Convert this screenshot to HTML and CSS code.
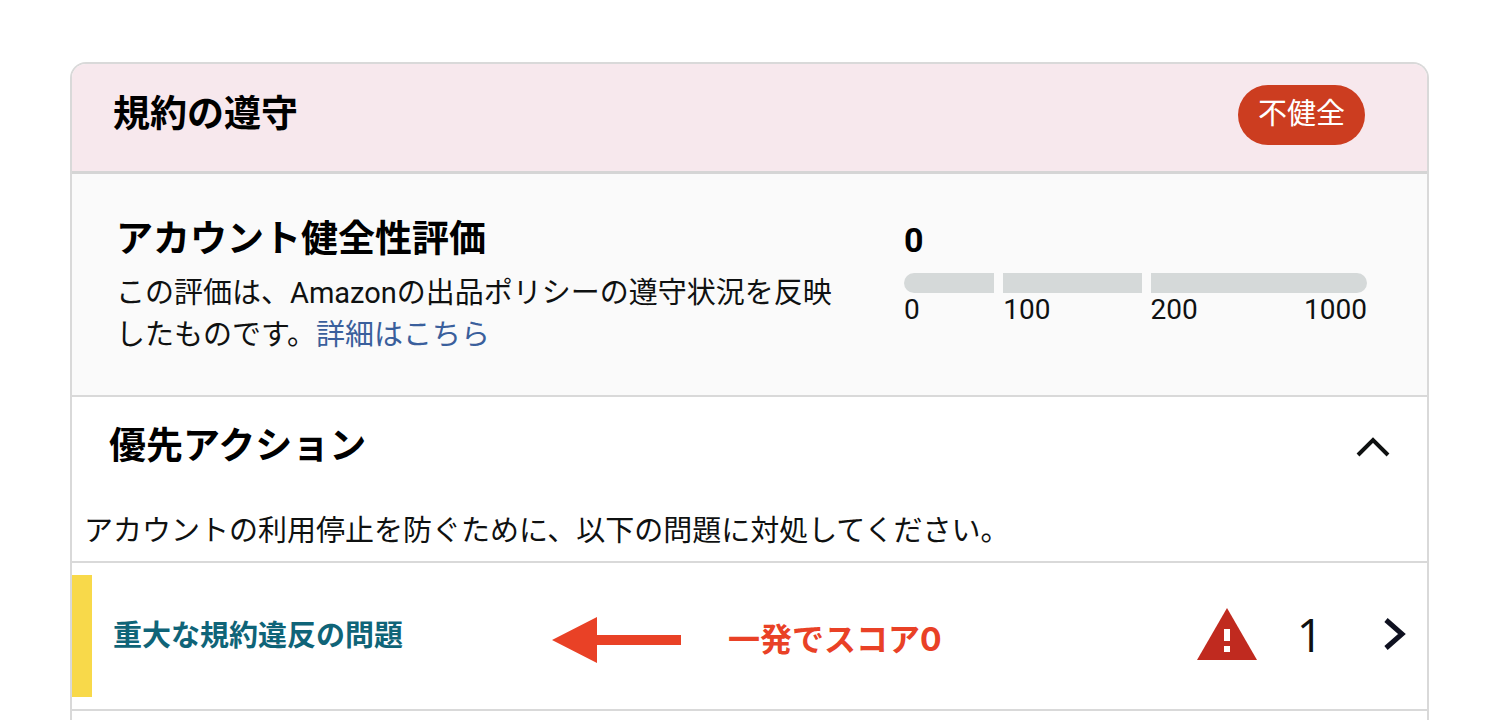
FILE: index.html
```html
<!DOCTYPE html>
<html lang="ja">
<head>
    <meta charset="UTF-8">
    <meta name="viewport" content="width=device-width, initial-scale=1.0">
    <title>規約の遵守</title>
    <link rel="stylesheet" href="styles.css">
</head>
<body>

    <main class="card">
        <header class="card-header">
            <h2>規約の遵守</h2>
            <span class="badge">不健全</span>
        </header>

        <section class="rating">
            <div class="rating-text">
                <h2>アカウント健全性評価</h2>
                <p>この評価は、Amazonの出品ポリシーの遵守状況を反映したものです。<a href="#">詳細はこちら</a></p>
            </div>
            <div class="rating-score">
                <strong class="score">0</strong>
                <div class="scale">
                    <div class="segment"><div class="bar"></div><span>0</span></div>
                    <div class="segment"><div class="bar"></div><span>100</span></div>
                    <div class="segment"><div class="bar"></div><span>200</span><span>1000</span></div>
                </div>
            </div>
        </section>

        <section class="actions">
            <div class="actions-header">
                <h2>優先アクション</h2>
                <button type="button" class="toggle" aria-label="閉じる" aria-expanded="true">
                    <svg width="36" height="24" viewBox="0 0 36 24"><path d="M3 20 L18 5 L33 20" fill="none" stroke="#0f1111" stroke-width="4"/></svg>
                </button>
            </div>
            <p>アカウントの利用停止を防ぐために、以下の問題に対処してください。</p>
        </section>

        <section class="issue">
            <div class="marker"></div>
            <a href="#" class="issue-link">重大な規約違反の問題</a>
            <div class="note">
                <svg width="130" height="46" viewBox="0 0 130 46"><path d="M0 23 L45 0 V18 H129 V28 H45 V46 Z" fill="#e94126"/></svg>
                <span>一発でスコア0</span>
            </div>
            <div class="issue-status">
                <svg width="60" height="52" viewBox="0 0 60 52">
                    <path d="M30 0 L60 52 H0 Z" fill="#c02a1f"/>
                    <path d="M27 21 H33 V33 H27 Z M27 38 H33 V44 H27 Z" fill="#fff"/>
                </svg>
                <span class="count">1</span>
                <button type="button" class="open" aria-label="開く">
                    <svg width="24" height="34" viewBox="0 0 24 34"><path d="M3 3 L19 17 L3 31" fill="none" stroke="#0f1120" stroke-width="5"/></svg>
                </button>
            </div>
        </section>
    </main>

</body>
</html>
```
FILE: styles.css
```css
* {
    box-sizing: border-box;
}

body {
    display: flex;
    min-height: 100vh;
    margin: 0;
    padding: 62px 71px 0 70px;
    background-color: #fff;
    color: #0f1111;
    font-family: Roboto, "Noto Sans CJK JP", sans-serif;
    font-size: 29px;
    line-height: 42px;
}

h2, p {
    margin: 0;
}

h2 {
    font-size: 37px;
    line-height: 48px;
    color: #000;
}

a {
    color: #3a5f9c;
    text-decoration: none;
}

button {
    display: flex;
    padding: 0;
    border: none;
    background: none;
    cursor: pointer;
}

svg {
    display: block;
    flex-shrink: 0;
}

.card {
    flex: 1;
    border: 2px solid #d9d9d9;
    border-bottom: none;
    border-radius: 16px 16px 0 0;
    overflow: hidden;
}

.card-header {
    display: flex;
    justify-content: space-between;
    align-items: center;
    padding: 21px 62px 26px 41px;
    background-color: #f7e8ed;
    border-bottom: 3px solid #d5d5d5;
}

.badge {
    padding: 8px 20px 10px;
    border-radius: 30px;
    background-color: #cc3d20;
    color: #fff;
}

.rating {
    display: grid;
    grid-template-columns: 732fr 463fr;
    gap: 56px;
    padding: 42px 60px 39px 44px;
    background-color: #fafafa;
    border-bottom: 2px solid #d9d9d9;
}

.rating-text p {
    margin-top: 8px;
}

.score {
    display: block;
    font-size: 34px;
    line-height: 48px;
    color: #000;
}

.scale {
    display: grid;
    grid-template-columns: 90fr 138fr 216fr;
    gap: 9px;
    margin-top: 9px;
    font-size: 28px;
    line-height: 34px;
}

.segment {
    display: flex;
    flex-wrap: wrap;
    justify-content: space-between;
}

.bar {
    width: 100%;
    height: 20px;
    background-color: #d5d9d9;
}

.segment:first-child .bar {
    border-radius: 10px 0 0 10px;
}

.segment:last-child .bar {
    border-radius: 0 10px 10px 0;
}

.actions {
    padding: 26px 36px 9px 12px;
    border-bottom: 2px solid #d9d9d9;
}

.actions-header {
    display: flex;
    justify-content: space-between;
    align-items: center;
    padding-left: 25px;
    margin-bottom: 39px;
}

.issue {
    display: flex;
    align-items: center;
    padding: 12px 20px 12px 0;
    border-bottom: 2px solid #d9d9d9;
}

.marker {
    width: 20px;
    height: 122px;
    margin-right: 21px;
    background-color: #f8d94a;
}

.issue-link {
    color: #0f6478;
    font-weight: bold;
}

.note {
    display: flex;
    align-items: center;
    gap: 46px;
    margin-left: 149px;
    padding-top: 8px;
    color: #e94126;
    font-family: Inter, "Noto Sans CJK JP", sans-serif;
    font-size: 32px;
    font-weight: bold;
}

.issue-status {
    display: flex;
    align-items: center;
    margin-left: auto;
    padding-bottom: 4px;
}

.count {
    margin: 0 60px 0 40px;
    font-family: "Open Sans", sans-serif;
    font-size: 46px;
}
```
